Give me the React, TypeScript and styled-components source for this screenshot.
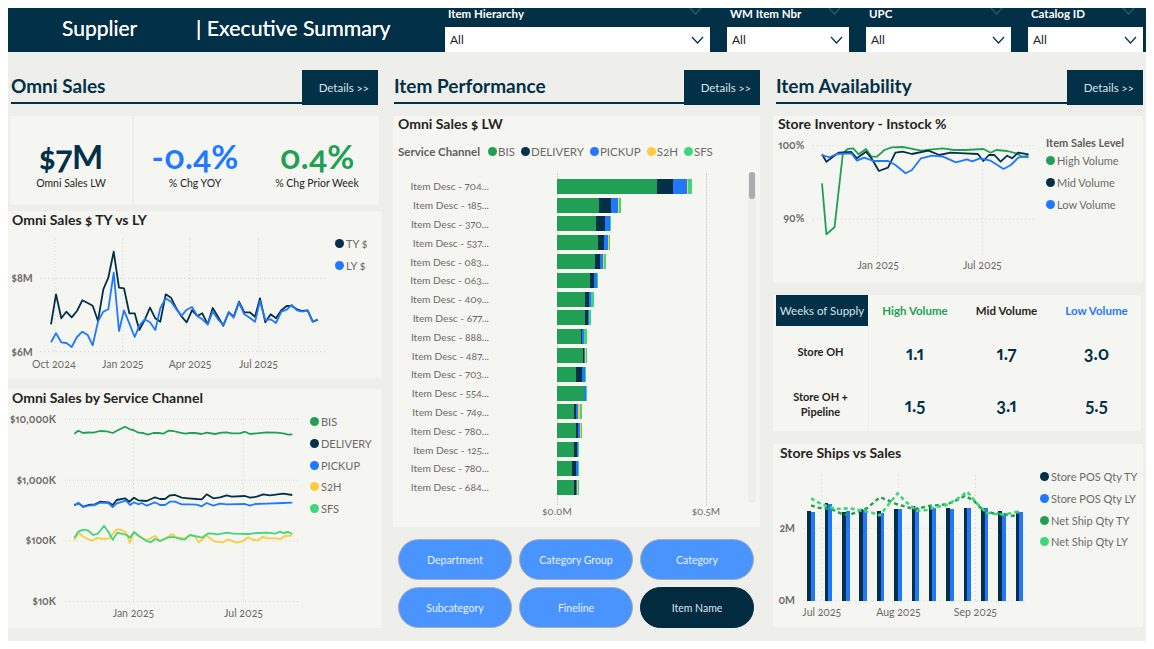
import React from "react";
import styled from "styled-components";

const NAVY = "#023047";
const GREEN = "#21A055";
const BLUE = "#1F78FF";
const YELLOW = "#FFCB3D";
const MINT = "#3FD67C";
const PANEL = "#F5F6F1";

const Page = styled.div`
  width: 1154px;
  height: 649px;
  margin: -8px;
  overflow: hidden;
  padding-top: 1px;
  display: flex;
  flex-direction: column;
  background: #EEEEEA;
  box-sizing: border-box;
  font-family: "Lato", serif;
  font-feature-settings: "onum" 1, "pnum" 1;
  font-variant-numeric: oldstyle-nums;
  & * {
    box-sizing: border-box;
  }
`;

const Header = styled.header`
  height: 51px;
  background: ${NAVY};
  display: flex;
  align-items: stretch;
  color: #fff;
`;
const Brand = styled.div`
  width: 445px;
  display: flex;
  align-items: center;
  padding: 1px 0 0 62px;
  font-weight: 400;
  text-shadow: 0 0 0.5px #fff;
  font-size: 21px;
  white-space: pre;
`;
const BrandName = styled.span`
  width: 134px;
`;
const BrandTitle = styled.span`
  font-size: 21.3px;
  padding-top: 2px;
`;
const Filters = styled.div`
  display: flex;
  gap: 17px;
`;
const Filter = styled.div<{ $w: number }>`
  width: ${(p) => p.$w}px;
  display: flex;
  flex-direction: column;
`;
const FilterLabel = styled.div`
  height: 26px;
  padding: 6px 8px 0 3px;
  display: flex;
  justify-content: space-between;
  font-size: 11.5px;
  font-weight: 700;
  line-height: 14px;
`;
const FilterBox = styled.div`
  height: 25px;
  background: #fff;
  color: #222;
  font-size: 12px;
  padding: 0 6px 0 5px;
  display: flex;
  justify-content: space-between;
  align-items: center;
`;
const Chevron = ({ faint }: { faint?: boolean }) => (
  <svg width="13" height="8" viewBox="0 0 13 8" fill="none" stroke={faint ? "#2E5C72" : NAVY} strokeWidth="1.2">
    <path d="M1 1l5.5 6L12 1" />
  </svg>
);

const Body = styled.main`
  flex: 1;
  display: grid;
  grid-template-columns: 374px 367px 370px;
  column-gap: 11px;
  padding: 18px 0 0 8px;
`;
const Column = styled.section`
  display: flex;
  flex-direction: column;
`;
const Column3 = styled(Column)`
  margin: 0 -2px 0 2px;
`;
const SectionHead = styled.div<{ $ml: number; $mr: number }>`
  height: 35px;
  margin: 0 ${(p) => p.$mr}px 11px ${(p) => p.$ml}px;
  display: flex;
  align-items: stretch;
`;
const SectionTitle = styled.h2`
  flex: 1;
  margin: 0 0 1px;
  border-bottom: 2px solid ${NAVY};
  color: ${NAVY};
  font-size: 19px;
  font-weight: 700;
  line-height: 31px;
`;
const DetailsBtn = styled.div`
  width: 76px;
  background: ${NAVY};
  color: #D6E4EA;
  font-size: 11.5px;
  padding: 11px 9px 0 0;
  text-align: right;
  white-space: nowrap;
`;

const Panel = styled.div<{ $h: number; $mt?: number }>`
  height: ${(p) => p.$h}px;
  margin-top: ${(p) => p.$mt || 0}px;
  background: ${PANEL};
  position: relative;
`;
const PanelTitle = styled.h3<{ $pl?: number; $up?: boolean }>`
  margin: 0;
  height: 20px;
  padding: ${(p) => (p.$up ? 0 : 1)}px 0 0 ${(p) => p.$pl ?? 4}px;
  font-size: 14px;
  line-height: 15px;
  font-weight: 700;
  color: #252423;
`;
const ChartRow = styled.div`
  display: flex;
  align-items: flex-start;
`;
const Legend = styled.div`
  padding-top: 2px;
  display: flex;
  flex-direction: column;
`;
const LegendTitle = styled.div`
  height: 15px;
  margin-top: -3px;
  font-size: 11px;
  font-weight: 700;
  color: #605E5C;
  line-height: 15px;
`;
const LegendItem = styled.div`
  height: 21.7px;
  display: flex;
  align-items: center;
  gap: 2px;
  font-size: 11px;
  color: #6C6A68;
  white-space: nowrap;
`;
const Dot = styled.span<{ $c: string }>`
  width: 9px;
  height: 9px;
  border-radius: 50%;
  background: ${(p) => p.$c};
  flex: none;
`;
const Axis = styled.text<{ $bold?: boolean }>`
  font-size: 10.5px;
  font-weight: ${(p) => (p.$bold ? 700 : 400)};
  fill: #6C6A68;
`;
const Grid = styled.line`
  stroke: #CFCFCA;
  stroke-width: 1;
  stroke-dasharray: 1 3;
`;

const KpiRow = styled.div`
  height: 89px;
  margin: 0 3px 0 2px;
  display: flex;
  gap: 2px;
`;
const KpiCard = styled.div<{ $w?: number }>`
  background: ${PANEL};
  display: flex;
  ${(p) => (p.$w ? `width:${p.$w}px;` : "flex:1;")}
`;
const Kpi = styled.div<{ $w: number }>`
  width: ${(p) => p.$w}px;
  display: flex;
  flex-direction: column;
  align-items: center;
  padding-top: 21px;
`;
const KpiValue = styled.div<{ $c: string }>`
  color: ${(p) => p.$c};
  font-size: 33px;
  line-height: 38px;
  font-weight: 700;
  height: 39px;
`;
const KpiLabel = styled.div`
  font-size: 10.5px;
  color: #252423;
  line-height: 14px;
`;

/* Item Performance */
const ChannelLegend = styled.div`
  display: flex;
  align-items: center;
  padding-left: 5px;
  margin-top: 6px;
  height: 18px;
  font-size: 11.5px;
  color: #6C6A68;
`;
const ChannelTitle = styled.span`
  font-weight: 700;
  color: #605E5C;
  margin-right: 8px;
`;
const ChannelItem = styled.span`
  display: flex;
  align-items: center;
  gap: 1px;
  margin-right: 6px;
`;
const BarList = styled.div`
  position: absolute;
  left: 0;
  top: 61px;
  width: 355px;
  display: flex;
  flex-direction: column;
`;
const BarRow = styled.div`
  height: 18.8px;
  display: flex;
  align-items: center;
`;
const BarLabel = styled.div`
  width: 96px;
  margin-right: 68px;
  text-align: right;
  font-size: 10.2px;
  color: #6C6A68;
  white-space: nowrap;
`;
const BarTrack = styled.div`
  height: 15px;
  display: flex;
`;
const Seg = styled.div<{ $c: string }>`
  height: 100%;
  background: ${(p) => p.$c};
`;
const VLine = styled.div<{ $x: number }>`
  position: absolute;
  left: ${(p) => p.$x}px;
  top: 57px;
  height: 332px;
  border-left: 1px dotted #C8C8C3;
`;
const XLabel = styled.div<{ $x: number }>`
  position: absolute;
  left: ${(p) => p.$x - 30}px;
  width: 60px;
  top: 389px;
  text-align: center;
  font-size: 10px;
  color: #6C6A68;
`;
const ScrollTrack = styled.div`
  position: absolute;
  left: 355px;
  top: 56px;
  width: 8px;
  height: 331px;
  border-radius: 4px;
  background: #EEEEEA;
`;
const ScrollThumb = styled.div`
  width: 6px;
  margin-left: 1px;
  height: 27px;
  border-radius: 3px;
  background: #ACACAC;
`;
const PillGrid = styled.div`
  margin: 12px 7px 0 5px;
  display: grid;
  grid-template-columns: repeat(3, 114px);
  grid-auto-rows: 41px;
  column-gap: 7px;
  row-gap: 7px;
`;
const Pill = styled.div<{ $active?: boolean }>`
  border-radius: 21px;
  background: ${(p) => (p.$active ? "#022B40" : "#4A94FF")};
  border: 1px solid ${(p) => (p.$active ? "#022B40" : "#A9AEB4")};
  color: ${(p) => (p.$active ? "#DCE6EA" : "#E8F0FB")};
  font-size: 10.5px;
  display: flex;
  align-items: center;
  justify-content: center;
`;

/* Weeks of supply */
const WeeksTable = styled.div`
  height: 136px;
  margin: 13px 2px 13px 0;
  background: ${PANEL};
  display: grid;
  grid-template-columns: 96px 92px 91px 1fr;
  grid-template-rows: 31px 52px 53px;
`;
const CornerCell = styled.div`
  margin-left: 3px;
  margin-right: 1px;
  background: ${NAVY};
  color: #D6E4EA;
  font-size: 11.5px;
  display: flex;
  align-items: center;
  justify-content: center;
  white-space: nowrap;
`;
const ColHead = styled.div<{ $c: string }>`
  color: ${(p) => p.$c};
  font-size: 11.5px;
  font-weight: 700;
  display: flex;
  align-items: center;
  justify-content: center;
`;
const RowHead = styled.div`
  border-right: 1px solid #EEEEEA;
  color: #252423;
  font-size: 11px;
  font-weight: 700;
  line-height: 15px;
  text-align: center;
  display: flex;
  align-items: center;
  justify-content: center;
  padding-bottom: 2px;
`;
const Val = styled.div`
  color: ${NAVY};
  font-size: 18px;
  font-weight: 700;
  display: flex;
  align-items: center;
  justify-content: center;
  padding-top: 1px;
`;

type Pt = number[];
const pts = (a: Pt, fx: number, fy: number, ox: number, oy: number) => {
  const out: string[] = [];
  for (let i = 0; i < a.length; i += 2) {
    out.push(`${(a[i] / fx + ox).toFixed(1)},${(a[i + 1] / fy + oy).toFixed(1)}`);
  }
  return out.join(" ");
};

const Line = ({ d, c, f, w = 1.8, dash }: { d: Pt; c: string; f: [number, number, number, number]; w?: number; dash?: string }) => (
  <polyline points={pts(d, ...f)} fill="none" stroke={c} strokeWidth={w} strokeLinejoin="round" strokeDasharray={dash} />
);

/* Omni TY vs LY */
const f1: [number, number, number, number] = [3, 3, -8, -26];
const TY1 = [153,358,168,268,184,340,199,320,215,337,231,318,247,286,263,294,278,302,294,348,310,253,325,218,341,140,357,248,372,250,388,325,404,325,418,375,434,345,450,308,466,340,481,350,497,268,513,278,529,310,545,335,560,352,576,316,592,333,607,325,623,358,638,309,654,335,670,362,686,322,701,335,717,290,733,322,749,322,765,335,780,280,796,352,812,328,828,340,844,316,860,303,875,303,891,313,907,318,923,316,938,350,953,345];
const LY1 = [153,412,168,385,184,412,199,414,215,426,231,396,247,380,263,390,278,421,294,350,310,320,325,313,341,203,357,378,372,316,388,355,404,396,418,362,434,343,450,352,466,375,481,310,497,280,513,290,529,313,545,332,560,314,576,306,592,333,607,343,623,358,638,320,654,343,670,360,686,322,701,338,717,293,733,328,749,338,765,350,780,288,796,345,812,343,828,354,844,320,860,314,875,300,891,316,907,320,923,316,938,350,953,343];

const TyChart = () => {
  const X = (z: number) => z / 3 - 8;
  const Y = (z: number) => z / 3 - 26;
  return (
    <svg width="327" height="147">
      {[220, 440].map((y) => <Grid key={y} x1={X(120)} x2={X(980)} y1={Y(y)} y2={Y(y)} />)}
      {[165, 368, 570, 775].map((x) => <Grid key={x} x1={X(x)} x2={X(x)} y1={Y(100)} y2={Y(440)} />)}
      <Axis $bold x={X(98)} y={Y(232)} textAnchor="end">$8M</Axis>
      <Axis $bold x={X(98)} y={Y(453)} textAnchor="end">$6M</Axis>
      {[["Oct 2024", 162], ["Jan 2025", 368], ["Apr 2025", 570], ["Jul 2025", 775]].map(([t, x]) => (
        <Axis key={t as string} x={X(x as number)} y={Y(488)} textAnchor="middle">{t}</Axis>
      ))}
      <Line d={TY1} c={NAVY} f={f1} />
      <Line d={LY1} c={BLUE} f={f1} />
    </svg>
  );
};

/* Service channel */
const f2: [number, number, number, number] = [3, 3, -8, -24];
const S_BIS = [223,146,235,137,250,144,265,142,280,143,300,138,320,139,338,144,355,135,375,125,390,133,400,135,415,143,430,144,443,149,460,144,475,144,490,146,505,137,520,138,540,143,555,146,570,144,585,144,605,147,620,143,645,147,665,143,680,142,695,145,720,145,735,140,750,147,770,145,800,142,830,143,850,145,865,149,877,148];
const S_DEL = [223,360,235,355,250,365,265,360,285,358,300,350,325,352,338,360,350,345,375,340,388,350,402,338,415,346,440,348,465,337,480,342,495,342,510,331,525,330,545,338,565,340,590,342,605,343,620,328,640,340,660,337,680,331,695,335,735,333,750,338,770,335,790,328,810,331,850,326,877,330];
const S_PICK = [223,362,235,353,250,366,265,362,285,360,300,353,325,354,338,366,350,355,378,347,390,360,402,352,415,358,425,354,440,362,465,352,480,360,495,360,510,350,525,350,545,358,565,358,590,359,605,364,620,354,640,362,660,356,680,358,735,357,750,362,765,357,800,356,850,354,877,353];
const S_S2H = [223,465,235,443,250,455,275,467,290,459,310,462,327,460,350,433,365,435,378,443,390,474,402,441,420,455,440,466,465,453,480,468,500,460,515,447,530,457,555,460,570,450,585,455,597,472,620,452,645,470,670,472,685,463,710,473,725,470,745,457,760,465,775,466,787,456,805,460,830,460,840,463,855,453,877,452];
const S_SFS = [223,458,235,440,250,434,265,437,280,450,295,445,312,422,325,440,338,464,352,443,380,450,390,458,402,441,415,452,440,468,452,472,465,462,480,468,500,458,520,456,545,463,555,463,570,450,590,454,605,458,625,445,640,446,650,448,665,446,680,443,700,446,745,447,760,445,800,443,825,446,840,440,850,444,865,441,877,447];

const ServiceChart = () => {
  const X = (z: number) => z / 3 - 8;
  const Y = (z: number) => z / 3 - 24;
  return (
    <svg width="302" height="219">
      {[103, 286, 468, 650].map((y) => <Grid key={y} x1={X(195)} x2={X(900)} y1={Y(y)} y2={Y(y)} />)}
      {[400, 730].map((x) => <Grid key={x} x1={X(x)} x2={X(x)} y1={Y(103)} y2={Y(650)} />)}
      {[["$10,000K", 113], ["$1,000K", 296], ["$100K", 478], ["$10K", 660]].map(([t, y]) => (
        <Axis key={t as string} $bold x={X(168)} y={Y(y as number)} textAnchor="end">{t}</Axis>
      ))}
      <Axis x={X(400)} y={Y(695)} textAnchor="middle">Jan 2025</Axis>
      <Axis x={X(730)} y={Y(695)} textAnchor="middle">Jul 2025</Axis>
      <Line d={S_BIS} c={GREEN} f={f2} />
      <Line d={S_DEL} c={NAVY} f={f2} />
      <Line d={S_PICK} c={BLUE} f={f2} />
      <Line d={S_S2H} c={YELLOW} f={f2} />
      <Line d={S_SFS} c={MINT} f={f2} />
    </svg>
  );
};

/* Instock */
const f3: [number, number, number, number] = [2.727, 3, -193, -136];
const I_H = [660,550,672,703,694,682,717,460,730,447,745,445,760,463,780,447,795,470,810,470,830,450,850,442,880,441,900,445,930,452,960,448,990,445,1020,450,1050,450,1100,447,1120,458,1135,450,1165,453,1190,460,1205,470,1223,472];
const I_M = [660,463,672,485,690,470,705,458,740,456,755,475,780,455,795,475,815,513,840,503,860,458,880,455,905,462,950,452,980,465,1010,458,1050,460,1085,462,1100,483,1115,465,1130,465,1147,485,1165,467,1178,475,1195,458,1223,463];
const I_L = [660,465,680,472,700,462,740,460,755,482,775,473,800,483,840,483,860,495,888,520,905,510,930,475,960,467,990,470,1025,487,1055,478,1070,484,1090,475,1120,482,1155,507,1175,495,1195,473,1223,467];

const InstockChart = () => {
  const X = (z: number) => z / 2.727 - 193;
  const Y = (z: number) => z / 3 - 136;
  return (
    <svg width="273" height="146">
      {[437, 657].map((y) => <Grid key={y} x1={X(635)} x2={X(1240)} y1={Y(y)} y2={Y(y)} />)}
      {[813, 1097].map((x) => <Grid key={x} x1={X(x)} x2={X(x)} y1={Y(437)} y2={Y(770)} />)}
      <Axis $bold x={X(612)} y={Y(447)} textAnchor="end">100%</Axis>
      <Axis $bold x={X(612)} y={Y(667)} textAnchor="end">90%</Axis>
      <Axis x={X(813)} y={Y(808)} textAnchor="middle">Jan 2025</Axis>
      <Axis x={X(1097)} y={Y(808)} textAnchor="middle">Jul 2025</Axis>
      <Line d={I_H} c={GREEN} f={f3} />
      <Line d={I_M} c={NAVY} f={f3} />
      <Line d={I_L} c={BLUE} f={f3} />
    </svg>
  );
};

/* Ships */
const f4: [number, number, number, number] = [3, 3, -3, -24];
const BARS = [
  [111,123,135,213,216],[165,175,186,189,192],[216,228,240,216,213],[267,278,291,207,210],
  [321,332,342,213,219],[372,384,396,207,207],[426,436,447,198,204],[477,487,498,201,204],
  [528,540,551,204,207],[582,592,603,204,204],[633,645,654,204,204],[684,696,708,213,219],[738,748,759,216,216],
];
const N_TY = [123,196,145,203,165,205,190,210,215,222,235,225,265,215,290,205,330,172,352,180,378,192,400,198,430,207,450,204,480,197,500,196,530,193,550,185,585,168,610,180,640,212,670,220,700,222,730,228,748,216];
const N_LY = [123,175,150,190,175,200,200,207,240,205,280,212,305,218,330,226,350,200,383,160,405,183,440,212,470,210,495,202,530,195,560,178,592,155,620,190,650,218,690,224,720,220,748,214];

const ShipsChart = () => {
  const X = (z: number) => z / 3 - 3;
  const Y = (z: number) => z / 3 - 24;
  return (
    <svg width="267" height="163">
      <Grid x1={X(100)} x2={X(765)} y1={Y(265)} y2={Y(265)} />
      <Grid x1={X(100)} x2={X(765)} y1={Y(483)} y2={Y(483)} />
      {[155, 385, 616].map((x) => <Grid key={x} x1={X(x)} x2={X(x)} y1={Y(105)} y2={Y(483)} />)}
      <Axis $bold x={X(75)} y={Y(277)} textAnchor="end">2M</Axis>
      <Axis $bold x={X(75)} y={Y(492)} textAnchor="end">0M</Axis>
      {[["Jul 2025", 155], ["Aug 2025", 385], ["Sep 2025", 616]].map(([t, x]) => (
        <Axis key={t as string} x={X(x as number)} y={Y(527)} textAnchor="middle">{t}</Axis>
      ))}
      {BARS.map(([a, b, c, t1, t2]) => (
        <g key={a}>
          <rect x={Math.round(X(a))} y={Y(t1)} width={Math.round(X(b)) - Math.round(X(a))} height={(483 - t1) / 3} fill={NAVY} />
          <rect x={Math.round(X(b))} y={Y(t2)} width={Math.round(X(c)) - Math.round(X(b))} height={(483 - t2) / 3} fill={BLUE} />
        </g>
      ))}
      <Line d={N_TY} c={GREEN} f={f4} w={2.4} dash="4 3" />
      <Line d={N_LY} c={MINT} f={f4} w={2.6} dash="4 3" />
    </svg>
  );
};

const ITEMS: [string, number[]][] = [
  ["704", [801,849,891,894,906]],["185", [627,663,684,687,693]],["370", [618,645,660,660.5,663]],
  ["537", [624,642,654,657,660]],["083", [615,630,639,641,648]],["063", [600,612,621,622,624]],
  ["409", [585,597,603,604,612]],["677", [585,594,597,598,603]],["888", [574,576,582,583,591]],
  ["487", [579,582,586,587,591]],["703", [558,576,585,586,588]],["554", [582,583,587,587.5,588]],
  ["749", [552,558,564,570,576]],["780", [558,564,570,572,576]],["125", [552,561,564,565,567]],
  ["780", [546,558,564,565,567]],["684", [552,558,561,564,567]],
];
const SEG = [GREEN, NAVY, BLUE, YELLOW, MINT];

const LegendOf = ({ items }: { items: [string, string][] }) => (
  <>
    {items.map(([t, c]) => (
      <LegendItem key={t}><Dot $c={c} />{t}</LegendItem>
    ))}
  </>
);

export default function App() {
  return (
    <Page>
      <Header>
        <Brand><BrandName>Supplier</BrandName><BrandTitle>| Executive Summary</BrandTitle></Brand>
        <Filters>
          {([["Item Hierarchy", 265], ["WM Item Nbr", 122], ["UPC", 145], ["Catalog ID", 115]] as [string, number][]).map(([t, w]) => (
            <Filter key={t} $w={w}>
              <FilterLabel>{t}<Chevron faint /></FilterLabel>
              <FilterBox>All<Chevron /></FilterBox>
            </Filter>
          ))}
        </Filters>
      </Header>
      <Body>
        <Column>
          <SectionHead $ml={3} $mr={4}>
            <SectionTitle>Omni Sales</SectionTitle>
            <DetailsBtn>Details &gt;&gt;</DetailsBtn>
          </SectionHead>
          <KpiRow>
            <KpiCard $w={122}>
              <Kpi $w={122}><KpiValue $c={NAVY}>$7M</KpiValue><KpiLabel>Omni Sales LW</KpiLabel></Kpi>
            </KpiCard>
            <KpiCard>
              <Kpi $w={122}><KpiValue $c={BLUE}>-0.4%</KpiValue><KpiLabel>% Chg YOY</KpiLabel></Kpi>
              <Kpi $w={122}><KpiValue $c={GREEN}>0.4%</KpiValue><KpiLabel>% Chg Prior Week</KpiLabel></Kpi>
            </KpiCard>
          </KpiRow>
          <Panel $h={167} $mt={6}>
            <PanelTitle>Omni Sales $ TY vs LY</PanelTitle>
            <ChartRow>
              <TyChart />
              <Legend><LegendOf items={[["TY $", NAVY], ["LY $", BLUE]]} /></Legend>
            </ChartRow>
          </Panel>
          <Panel $h={239} $mt={11}>
            <PanelTitle>Omni Sales by Service Channel</PanelTitle>
            <ChartRow>
              <ServiceChart />
              <Legend><LegendOf items={[["BIS", GREEN], ["DELIVERY", NAVY], ["PICKUP", BLUE], ["S2H", YELLOW], ["SFS", MINT]]} /></Legend>
            </ChartRow>
          </Panel>
        </Column>
        <Column>
          <SectionHead $ml={1} $mr={0}>
            <SectionTitle>Item Performance</SectionTitle>
            <DetailsBtn>Details &gt;&gt;</DetailsBtn>
          </SectionHead>
          <Panel $h={411}>
            <PanelTitle $pl={5} $up>Omni Sales $ LW</PanelTitle>
            <ChannelLegend>
              <ChannelTitle>Service Channel</ChannelTitle>
              {([["BIS", GREEN], ["DELIVERY", NAVY], ["PICKUP", BLUE], ["S2H", YELLOW], ["SFS", MINT]] as [string, string][]).map(([t, c]) => (
                <ChannelItem key={t}><Dot $c={c} />{t}</ChannelItem>
              ))}
            </ChannelLegend>
            <VLine $x={164} />
            <VLine $x={313} />
            <BarList>
              {ITEMS.map(([id, ends], i) => (
                <BarRow key={i}>
                  <BarLabel>Item Desc - {id}...</BarLabel>
                  <BarTrack>
                    {ends.map((e, k) => (
                      <Seg key={k} $c={SEG[k]} style={{ width: (e - (k ? ends[k - 1] : 501)) / 3 }} />
                    ))}
                  </BarTrack>
                </BarRow>
              ))}
            </BarList>
            <XLabel $x={164}>$0.0M</XLabel>
            <XLabel $x={313}>$0.5M</XLabel>
            <ScrollTrack><ScrollThumb /></ScrollTrack>
          </Panel>
          <PillGrid>
            <Pill>Department</Pill>
            <Pill>Category Group</Pill>
            <Pill>Category</Pill>
            <Pill>Subcategory</Pill>
            <Pill>Fineline</Pill>
            <Pill $active>Item Name</Pill>
          </PillGrid>
        </Column>
        <Column3>
          <SectionHead $ml={3} $mr={0}>
            <SectionTitle>Item Availability</SectionTitle>
            <DetailsBtn>Details &gt;&gt;</DetailsBtn>
          </SectionHead>
          <Panel $h={166}>
            <PanelTitle $pl={5} $up>Store Inventory - Instock %</PanelTitle>
            <ChartRow>
              <InstockChart />
              <Legend>
                <LegendTitle>Item Sales Level</LegendTitle>
                <LegendOf items={[["High Volume", GREEN], ["Mid Volume", NAVY], ["Low Volume", BLUE]]} />
              </Legend>
            </ChartRow>
          </Panel>
          <WeeksTable>
            <CornerCell>Weeks of Supply</CornerCell>
            <ColHead $c={GREEN}>High Volume</ColHead>
            <ColHead $c="#252423">Mid Volume</ColHead>
            <ColHead $c={BLUE}>Low Volume</ColHead>
            <RowHead>Store OH</RowHead>
            <Val>1.1</Val><Val>1.7</Val><Val>3.0</Val>
            <RowHead>Store OH +<br />Pipeline</RowHead>
            <Val>1.5</Val><Val>3.1</Val><Val>5.5</Val>
          </WeeksTable>
          <Panel $h={183}>
            <PanelTitle $pl={7}>Store Ships vs Sales</PanelTitle>
            <ChartRow>
              <ShipsChart />
              <Legend><LegendOf items={[["Store POS Qty TY", NAVY], ["Store POS Qty LY", BLUE], ["Net Ship Qty TY", GREEN], ["Net Ship Qty LY", MINT]]} /></Legend>
            </ChartRow>
          </Panel>
        </Column3>
      </Body>
    </Page>
  );
}
